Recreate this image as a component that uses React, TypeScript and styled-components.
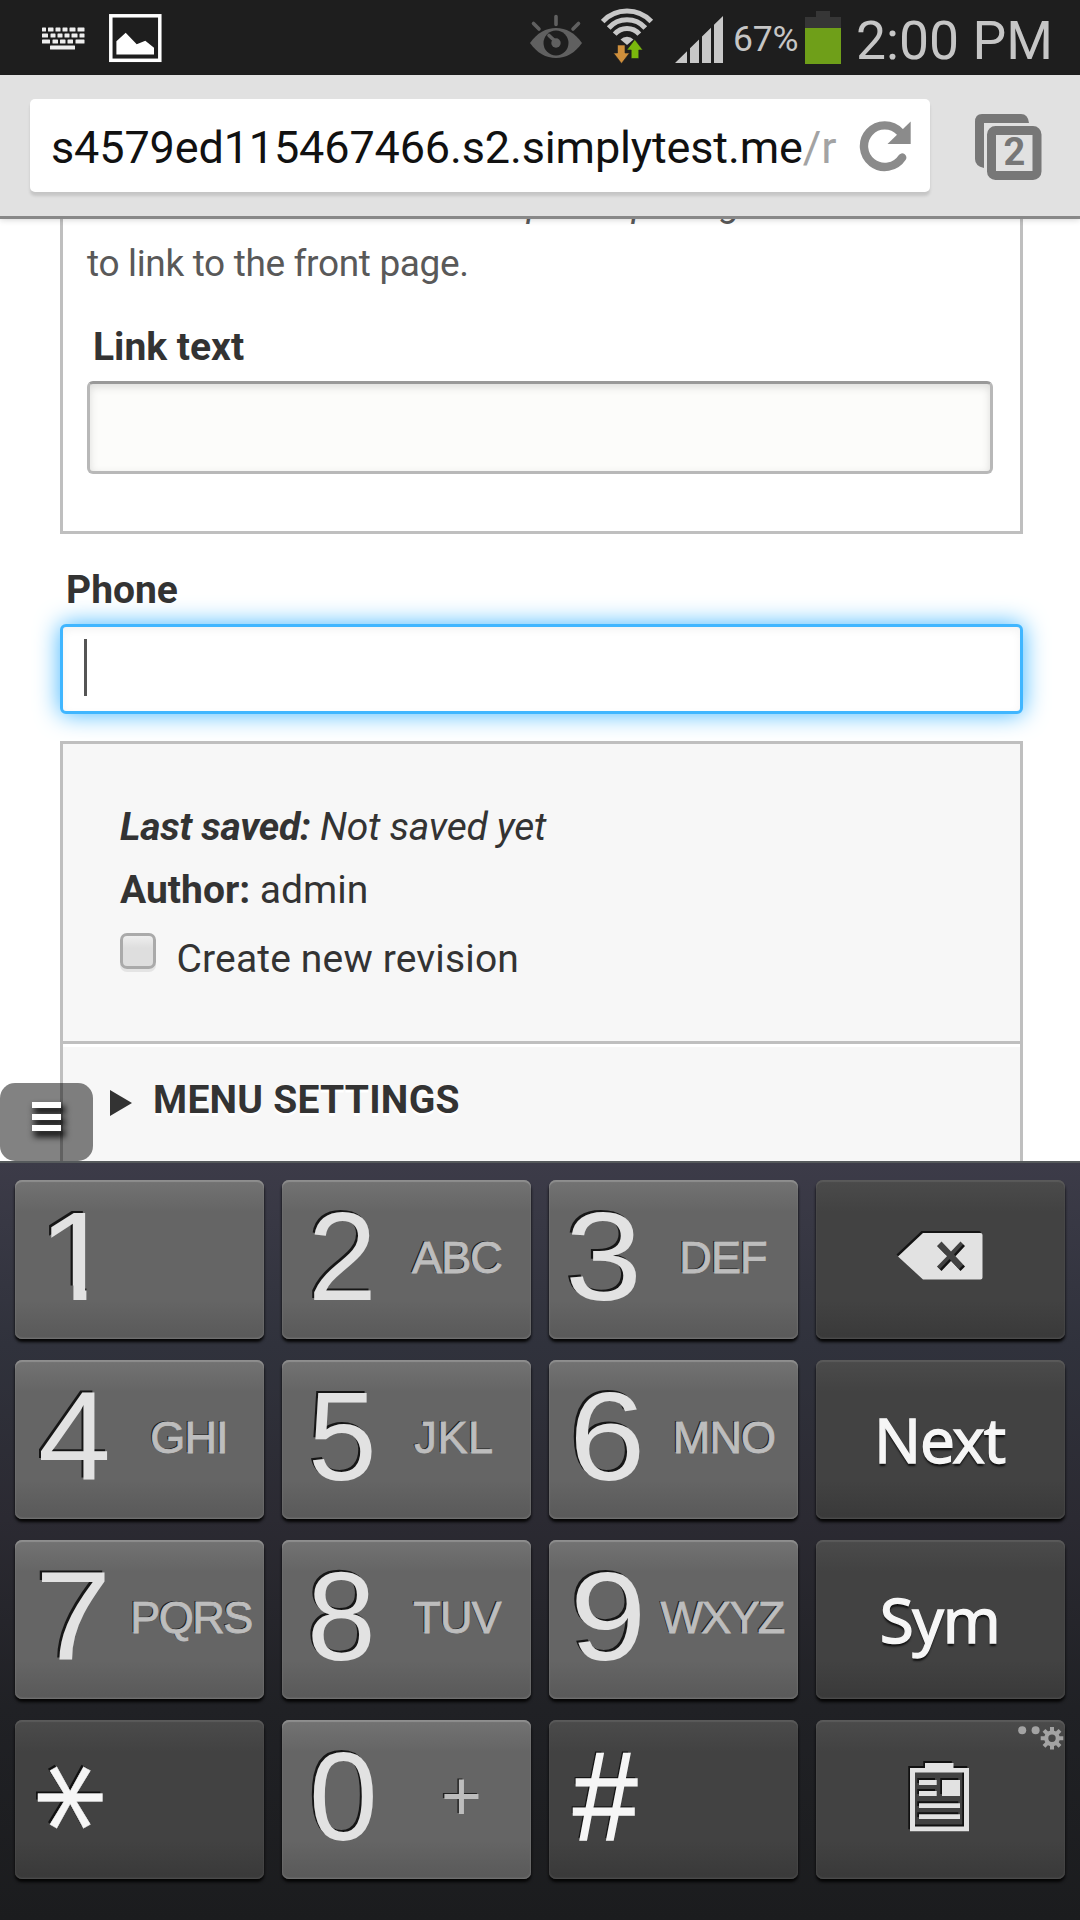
import React from "react";
import styled, { createGlobalStyle } from "styled-components";

const GlobalStyle = createGlobalStyle`
  *, *::before, *::after { box-sizing: border-box; }
  html, body { margin: 0; padding: 0; background: #fff; }
  body { font-family: Roboto, sans-serif; overflow: hidden; }
  svg { display: block; flex: none; }
`;

const Screen = styled.div`
  width: 1080px;
  height: 1920px;
  display: flex;
  flex-direction: column;
  overflow: hidden;
  background: #fff;
`;

/* ---------- status bar ---------- */

const StatusBar = styled.header`
  flex: none;
  height: 75px;
  display: flex;
  justify-content: space-between;
  padding: 0 28px 0 41px;
  background: #1e1e1e;
  color: #c6c6c6;
`;

const StatusGroup = styled.div`
  display: flex;
  align-items: flex-start;
`;

const BatteryLevel = styled.span`
  width: 65px;
  margin: 0 7px 0 9px;
  font-size: 35.5px;
  line-height: 78px;
  letter-spacing: -0.2px;
  white-space: nowrap;
`;

const Clock = styled.span`
  width: 196px;
  margin-left: 15px;
  font-size: 53.5px;
  line-height: 82px;
  white-space: nowrap;
`;

/* ---------- browser toolbar ---------- */

const Toolbar = styled.div`
  flex: none;
  position: relative;
  z-index: 1;
  height: 144px;
  display: flex;
  align-items: flex-start;
  padding: 24px 38px 0 30px;
  background: #e1e1e1;
  border-bottom: 3px solid #888;
  box-shadow: 0 1px 6px rgba(0, 0, 0, 0.16);
`;

const AddressBox = styled.div`
  width: 900px;
  height: 93px;
  display: flex;
  align-items: flex-start;
  justify-content: space-between;
  padding: 0 19px 0 21px;
  border-radius: 5px;
  background: #fff;
  box-shadow: 0 4px 3px rgba(0, 0, 0, 0.12);
`;

const Address = styled.div`
  width: 788px;
  overflow: hidden;
  font-size: 45px;
  line-height: 97px;
  letter-spacing: -0.14px;
  white-space: nowrap;
  color: #111;
`;

const AddressPath = styled.span`
  color: #a3a3a3;
`;

const TabsButton = styled.div`
  display: grid;
  margin: 15px 0 0 45px;
  > * { grid-area: 1 / 1; }
`;

const TabCount = styled.span`
  padding-left: 28.5px;
  font-size: 38px;
  font-weight: 700;
  line-height: 77px;
  color: #777;
`;

/* ---------- web page ---------- */

const Page = styled.main`
  position: relative;
  flex: none;
  height: 942px;
  padding: 0 57px 0 60px;
  overflow: hidden;
  color: #333;
`;

const Fieldset = styled.section`
  display: flow-root;
  height: 315px;
  padding: 0 27px 0 24px;
  border: solid #bfbfbf;
  border-width: 0 3px 3px;
`;

const HelpText = styled.p`
  margin: -45px 0 0;
  font-size: 37px;
  line-height: 60px;
  letter-spacing: -0.34px;
  color: #595959;
  white-space: nowrap;
`;

const HelpExample = styled.span`
  letter-spacing: -0.26px;
`;

const FieldLabel = styled.label<{ $top: number; $gap: number }>`
  display: block;
  margin: ${(p) => p.$top}px 0 ${(p) => p.$gap}px 6px;
  font-size: 39px;
  font-weight: 700;
  line-height: 60px;
`;

const LinkInput = styled.div`
  height: 93px;
  border: 3px solid #b8b8b8;
  border-top-color: #999;
  border-radius: 6px;
  background: #fcfcfa;
  box-shadow: inset 0 3px 9px rgba(0, 0, 0, 0.13);
`;

const PhoneInput = styled.div`
  height: 90px;
  padding: 12px 0 0 21px;
  border: 3px solid #40b6ff;
  border-radius: 6px;
  background: #fff;
  box-shadow: 0 0 24px #40b6ff, inset 0 3px 9px rgba(0, 0, 0, 0.05);
`;

const Caret = styled.div`
  width: 3px;
  height: 57px;
  background: #555;
`;

const Details = styled.section`
  height: 500px;
  margin-top: 27px;
  border: 3px solid #bfbfbf;
  background: #f7f7f7;
`;

const RevisionInfo = styled.div`
  height: 300px;
  padding: 52px 57px 0;
  border-bottom: 3px solid #bfbfbf;
  font-size: 39px;
  line-height: 63px;
`;

const Line = styled.div<{ $spacing?: number }>`
  letter-spacing: ${(p) => p.$spacing ?? 0}px;
  white-space: nowrap;
`;

const CheckRow = styled.label`
  display: flex;
  align-items: flex-start;
  gap: 20.5px;
  margin-top: 6px;
  letter-spacing: 0.16px;
`;

const Checkbox = styled.span`
  width: 36px;
  height: 36px;
  margin-top: 5px;
  border: 3px solid #aaa;
  border-radius: 7px;
  background: linear-gradient(#eee, #dedede 40%, #dedede);
  box-shadow: 0 3px 0 #e4e4e4;
`;

const Summary = styled.div`
  display: flex;
  align-items: flex-start;
  gap: 21px;
  padding: 23px 0 0 47px;
  border-top: 3px solid #fff;
  font-size: 39px;
  font-weight: 700;
  line-height: 60px;
  letter-spacing: 0.25px;
  text-shadow: 0 3px 0 #fff;
`;

const Arrow = styled.span`
  width: 0;
  height: 0;
  margin-top: 20px;
  border: solid transparent;
  border-width: 13px 0 13px 22px;
  border-left-color: #333;
`;

const MenuToggle = styled.div`
  position: absolute;
  left: 0;
  bottom: 0;
  width: 93px;
  height: 78px;
  display: flex;
  flex-direction: column;
  gap: 5.5px;
  padding: 19px 32px;
  border-radius: 15px;
  background: rgba(0, 0, 0, 0.49);
`;

const ToggleBar = styled.span`
  height: 6px;
  background: #fff;
  box-shadow: 3px 5px 6px 1px rgba(0, 0, 0, 0.85);
`;

/* ---------- keypad ---------- */

const Keypad = styled.section`
  flex: none;
  height: 759px;
  display: grid;
  grid-template-columns: repeat(4, 249px);
  grid-template-rows: repeat(4, 159px);
  column-gap: 18px;
  row-gap: 21px;
  padding: 17px 15px 0;
  border-top: 2px solid #565a5c;
  background: linear-gradient(#3c3b48, #30323c 24%, #2b2a32 47%, #202125 72%, #1b1c1e);
`;

const Key = styled.div<{ $dark?: boolean }>`
  display: flex;
  align-items: flex-start;
  overflow: hidden;
  border-radius: 7px;
  white-space: nowrap;
  background: ${(p) =>
    p.$dark
      ? "linear-gradient(#4b4b4b, #424242 20%, #424242 76%, #393939)"
      : "linear-gradient(#737373, #656565 20%, #656565 76%, #595959)"};
  box-shadow: inset 0 2px 1px ${(p) => (p.$dark ? "#5a5a5a" : "#8e8e8e")},
    inset 0 -1px 2px ${(p) => (p.$dark ? "#505050" : "#777")}, 0 3px 3px #050505;
`;

const Digit = styled.span<{ $left: number; $stretch: number; $bright?: boolean }>`
  flex: none;
  width: ${(p) => 101 - p.$left}px;
  margin-left: ${(p) => p.$left}px;
  font-family: "Liberation Sans", sans-serif;
  font-size: 126px;
  line-height: 153px;
  color: ${(p) => (p.$bright ? "#f6f6f6" : "#e2e2e2")};
  -webkit-text-stroke: ${(p) => (p.$bright ? "1.6px #f6f6f6" : "0")};
  text-shadow: -2px -2px 0 #161616;
  transform: scaleX(${(p) => p.$stretch});
  transform-origin: left;
`;

/* The numeral one is shown as a bare stem, without its foot. */
const StemDigit = styled(Digit)`
  clip-path: polygon(0 0, 100% 0, 100% 69%, 44px 69%, 44px 100%, 32.2px 100%, 32.2px 69%, 0 69%);
`;

const Letters = styled.span<{ $nudge?: number; $spacing?: number }>`
  flex: none;
  width: 148px;
  margin-left: ${(p) => p.$nudge ?? 0}px;
  text-align: center;
  font-family: "Liberation Sans", sans-serif;
  font-size: 45px;
  line-height: 155px;
  letter-spacing: ${(p) => p.$spacing ?? -0.8}px;
  color: #bdbdbd;
  -webkit-text-stroke: 0.9px #bdbdbd;
  text-shadow: -1.5px -1.5px 0 #222;
`;

const Plus = styled(Letters)`
  font-size: 70px;
  line-height: 152px;
  -webkit-text-stroke: 0;
`;

const Star = styled.span`
  width: 112px;
  text-align: center;
  font-family: "DejaVu Sans", sans-serif;
  font-size: 140px;
  line-height: 159px;
  color: #f6f6f6;
  -webkit-text-stroke: 0.4px #f6f6f6;
  text-shadow: -2px 2px 0 #111;
  transform: translate(-24.5px, -2px) rotate(90deg);
`;

const ActionLabel = styled.span`
  width: 100%;
  padding-right: 2px;
  text-align: center;
  font-family: "Noto Sans", sans-serif;
  font-size: 62px;
  line-height: 159px;
  letter-spacing: -1.3px;
  color: #f6f6f6;
  -webkit-text-stroke: 1.3px #f6f6f6;
  text-shadow: 0 3px 2px #111;
`;

type NumberKey = {
  digit: string;
  letters?: string;
  left: number;
  stretch?: number;
  nudge?: number;
  spacing?: number;
};

const numberKeys: Record<string, NumberKey> = {
  "1": { digit: "1", left: 23, stretch: 1.1 },
  "2": { digit: "2", letters: "ABC", left: 26, stretch: 0.98 },
  "3": { digit: "3", letters: "DEF", left: 16, stretch: 1.1, nudge: -1 },
  "4": { digit: "4", letters: "GHI", left: 22.5, stretch: 1.04, nudge: -1 },
  "5": { digit: "5", letters: "JKL", left: 26, stretch: 0.98, nudge: -3, spacing: 0.6 },
  "6": { digit: "6", letters: "MNO", left: 20, stretch: 1.09 },
  "7": { digit: "7", letters: "PQRS", left: 20, stretch: 1.09, nudge: 1, spacing: -1.5 },
  "8": { digit: "8", letters: "TUV", left: 25, stretch: 0.98 },
  "9": { digit: "9", letters: "WXYZ", left: 21, stretch: 1.09, nudge: -2, spacing: -1.8 },
};

function NumericKey({ id }: { id: string }) {
  const k = numberKeys[id];
  const Figure = id === "1" ? StemDigit : Digit;
  return (
    <Key>
      <Figure $left={k.left} $stretch={k.stretch ?? 1}>{k.digit}</Figure>
      {k.letters && <Letters $nudge={k.nudge} $spacing={k.spacing}>{k.letters}</Letters>}
    </Key>
  );
}

/* ---------- icons ---------- */

const KeyboardIcon = () => (
  <svg width="68" height="75" viewBox="41 0 68 75" fill="#eee">
    {[
      [27.5, [[42, 4], [48, 5.5], [55.5, 5], [62.5, 5], [69.5, 6], [77.5, 7]]],
      [33.5, [[42, 6], [50.5, 5], [57.5, 5], [64.5, 5], [71.5, 6], [79.5, 5]]],
      [39.5, [[42, 8], [52.5, 5.5], [60, 5.5], [67.5, 5.5], [75.5, 9]]],
      [45.5, [[50, 25]]],
    ].map(([y, cells]: any) =>
      cells.map(([x, w]: number[]) => <rect key={`${x}-${y}`} x={x} y={y} width={w} height="4" rx="0.6" />)
    )}
  </svg>
);

const PictureIcon = () => (
  <svg width="53" height="75" viewBox="109 0 53 75">
    <rect x="110.8" y="15.8" width="49" height="44.5" fill="none" stroke="#fff" strokeWidth="3.5" />
    <path d="M116.4 54.5V41.3L125.7 32.7L136.7 44.3L145.3 40.7L154 47.7V54.5Z" fill="#fff" />
  </svg>
);

const EyeIcon = () => (
  <svg width="72" height="75" viewBox="529 0 72 75">
    <path d="M530 43C537 33 546 28 556 28S575 33 582 43C575 53 566 58 556 58S537 53 530 43Z" fill="#606060" />
    <circle cx="556" cy="43" r="12.5" fill="#1e1e1e" />
    <circle cx="556" cy="43" r="4.7" fill="#606060" />
    <path d="M556 42L549 35.5M556 16.5V24.5M533.5 23.5L539 29M578.5 23.5L573 29" stroke="#606060" strokeWidth="3.6" strokeLinecap="round" />
  </svg>
);

const WifiIcon = () => (
  <svg width="74" height="75" viewBox="601 0 74 75">
    <g fill="none" stroke="#c8c8c8" strokeWidth="5">
      <path d="M602.7 21.5A33.5 33.5 0 0 1 651.3 21.5" />
      <path d="M608.7 28A24.5 24.5 0 0 1 645.3 28" />
      <path d="M614.7 34.2A16.3 16.3 0 0 1 639.3 34.2" />
    </g>
    <path d="M620.5 39.5A9 9 0 0 1 633.5 39.5L627 45Z" fill="#c8c8c8" />
    <path d="M617.5 45H625V53H629.5L621.5 63.5L613.5 53H617.5Z" fill="#cf8f3c" stroke="#1e1e1e" strokeWidth="0.6" />
    <path d="M631.2 58.5H638.8V50H642.8L634.8 39.5L626.8 50H631.2Z" fill="#7ab80c" stroke="#1e1e1e" strokeWidth="0.6" />
  </svg>
);

const SignalIcon = () => (
  <svg width="49" height="75" viewBox="675 0 49 75" fill="#c8c8c8">
    <path d="M675 63L687 51.2V63ZM690 63V48.3L699 39.5V63ZM702 63V36.5L711 27.7V63ZM714 63V24.8L723 16V63Z" />
  </svg>
);

const BatteryIcon = () => (
  <svg width="36" height="75" viewBox="805 0 36 75">
    <path d="M816 11H830V17H841V28H805V17H816Z" fill="#363636" />
    <rect x="805" y="28" width="36" height="36" fill="#6f9f19" />
  </svg>
);

const ReloadIcon = () => (
  <svg width="52" height="93" viewBox="859 99 52 93">
    <path d="M902.2 157.5A20.8 20.8 0 1 1 900 132" fill="none" stroke="#8b8b8b" strokeWidth="8.4" strokeLinecap="round" />
    <path d="M910.7 121.5V144H887.5Z" fill="#8b8b8b" />
  </svg>
);

const TabsIcon = () => (
  <svg width="67" height="67" viewBox="975 114 67 67">
    <path d="M982 114H1021Q1028 114 1029 123H984V168Q975 166 975 159V122Q975 114 982 114Z" fill="#777" />
    <rect x="991.5" y="130.5" width="45.5" height="45" rx="4" fill="none" stroke="#777" strokeWidth="9" />
  </svg>
);

const DeleteShape = ({ fill }: { fill: string }) => (
  <path
    fillRule="evenodd"
    fill={fill}
    d="M898 1256.5L923 1233H980.5Q982.5 1233 982.5 1235V1277.5Q982.5 1279.5 980.5 1279.5H923ZM941.5 1241.5L937 1246L947 1256.3L937 1266.5L941.5 1271L951 1261L960.5 1271L965 1266.5L955.5 1256.3L965 1246L960.5 1241.5L951 1251.5Z"
  />
);

const DeleteIcon = () => (
  <svg width="249" height="159" viewBox="816 1180 249 159">
    <g transform="translate(-1.5 -2)"><DeleteShape fill="#141414" /></g>
    <DeleteShape fill="#e2e2e2" />
  </svg>
);

const ClipboardShape = ({ fill }: { fill: string }) => (
  <path
    fillRule="evenodd"
    fill={fill}
    d="M910 1768H925V1763H953.5V1768H969V1831.3H910ZM915 1772.5V1826.5H964V1772.5ZM919 1780H936.7V1785H919ZM919 1791H936.7V1796H919ZM942 1780H960V1796H942ZM919 1803.3H960V1808H919ZM919 1814.2H960V1819H919Z"
  />
);

const ClipboardIcon = () => (
  <svg width="249" height="159" viewBox="816 1720 249 159">
    <g transform="translate(-1.7 -2)"><ClipboardShape fill="#111" /></g>
    <ClipboardShape fill="#e2e2e2" />
    <g fill="#a3a3a3">
      <circle cx="1022.2" cy="1730.3" r="4" />
      <circle cx="1035.6" cy="1730.3" r="4" />
    </g>
    <circle cx="1052" cy="1738.3" r="5.8" fill="none" stroke="#a3a3a3" strokeWidth="4.2" />
    <g stroke="#a3a3a3" strokeWidth="4">
      {[0, 45, 90, 135, 180, 225, 270, 315].map((a) => (
        <path key={a} d="M1052 1731.5V1727" transform={`rotate(${a} 1052 1738.3)`} />
      ))}
    </g>
  </svg>
);

export default function App() {
  return (
    <Screen>
      <GlobalStyle />
      <StatusBar>
        <StatusGroup>
          <KeyboardIcon />
          <PictureIcon />
        </StatusGroup>
        <StatusGroup>
          <EyeIcon />
          <WifiIcon />
          <SignalIcon />
          <BatteryLevel>67%</BatteryLevel>
          <BatteryIcon />
          <Clock>2:00 PM</Clock>
        </StatusGroup>
      </StatusBar>

      <Toolbar>
        <AddressBox>
          <Address>
            s4579ed115467466.s2.simplytest.me<AddressPath>/r</AddressPath>
          </Address>
          <ReloadIcon />
        </AddressBox>
        <TabsButton>
          <TabsIcon />
          <TabCount>2</TabCount>
        </TabsButton>
      </Toolbar>

      <Page>
        <Fieldset>
          <HelpText>
            <HelpExample>
              an external URL such as <em>http://drupal.org</em>. Enter <em>&lt;front&gt;</em>
            </HelpExample>
            <br />
            to link to the front page.
          </HelpText>
          <FieldLabel $top={23} $gap={4}>Link text</FieldLabel>
          <LinkInput />
        </Fieldset>

        <FieldLabel $top={26} $gap={4}>Phone</FieldLabel>
        <PhoneInput>
          <Caret />
        </PhoneInput>

        <Details>
          <RevisionInfo>
            <Line $spacing={-0.25}>
              <em><b>Last saved:</b> Not saved yet</em>
            </Line>
            <Line>
              <b>Author:</b> admin
            </Line>
            <CheckRow>
              <Checkbox />
              Create new revision
            </CheckRow>
          </RevisionInfo>
          <Summary>
            <Arrow />
            MENU SETTINGS
          </Summary>
        </Details>

        <MenuToggle>
          <ToggleBar />
          <ToggleBar />
          <ToggleBar />
        </MenuToggle>
      </Page>

      <Keypad>
        <NumericKey id="1" />
        <NumericKey id="2" />
        <NumericKey id="3" />
        <Key $dark><DeleteIcon /></Key>
        <NumericKey id="4" />
        <NumericKey id="5" />
        <NumericKey id="6" />
        <Key $dark><ActionLabel>Next</ActionLabel></Key>
        <NumericKey id="7" />
        <NumericKey id="8" />
        <NumericKey id="9" />
        <Key $dark><ActionLabel>Sym</ActionLabel></Key>
        <Key $dark><Star>*</Star></Key>
        <Key>
          <Digit $left={26.5} $stretch={0.98}>0</Digit>
          <Plus $nudge={4}>+</Plus>
        </Key>
        <Key $dark>
          <Digit $left={24} $stretch={0.92} $bright>#</Digit>
        </Key>
        <Key $dark><ClipboardIcon /></Key>
      </Keypad>
    </Screen>
  );
}
